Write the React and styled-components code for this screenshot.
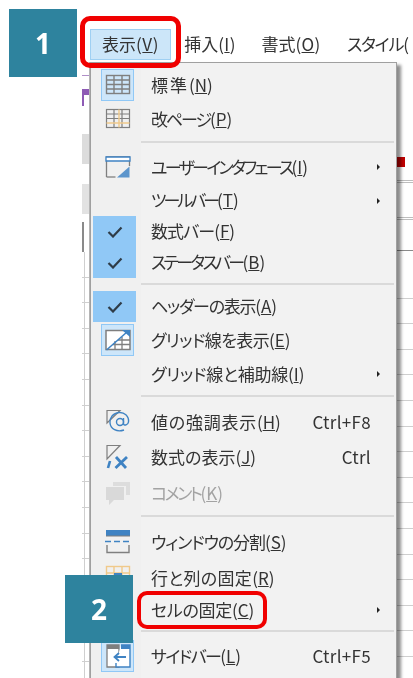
import React from "react";
import styled, { createGlobalStyle } from "styled-components";

const Global = createGlobalStyle`
  html, body { margin: 0; padding: 0; background: #fff; }
  body { font-family: "Noto Sans CJK JP", "Noto Sans", sans-serif; font-feature-settings: "palt"; }
`;

const Page = styled.div`
  position: relative;
  width: 413px;
  height: 678px;
  overflow: hidden;
  background: #fff;
  color: #333;
  filter: blur(0.35px);
`;

const MenuBar = styled.div`
  display: flex;
  align-items: center;
  height: 31px;
  padding: 29px 5px 2px 90px;
  font-size: 17px;
  overflow: hidden;
`;

const BarItem = styled.div`
  flex: none;
  width: ${(p) => p.$w}px;
  height: 31px;
  margin-left: ${(p) => p.$gap || 0}px;
  padding-bottom: 2px;
  display: flex;
  align-items: center;
  justify-content: ${(p) => (p.$clip ? "flex-start" : "center")};
  box-sizing: border-box;
  white-space: nowrap;
  letter-spacing: ${(p) => p.$ls || 0}px;
  background: ${(p) => (p.$active ? "#cce6f9" : "transparent")};
  border: 1px solid ${(p) => (p.$active ? "#9fd0f3" : "transparent")};
`;

const Body = styled.div`
  display: flex;
  height: 616px;
  margin-left: 82px;
`;

const Strip = styled.div`
  flex: none;
  width: ${(p) => p.$w}px;
  display: flex;
  flex-direction: column;
  overflow: hidden;
`;

const Sliver = styled.div`
  flex: none;
  height: ${(p) => p.$h}px;
  width: ${(p) => p.$w || "100%"};
  background: ${(p) => p.$bg || "transparent"};
`;

const GridFill = styled.div`
  flex: 1;
  background-color: #fff;
  background-image:
    repeating-linear-gradient(to bottom, transparent 0 24.6px, #cfcfcf 24.6px 25.6px),
    ${(p) => p.$rail || "none"};
`;

const Menu = styled.div`
  position: relative;
  z-index: 1;
  flex: none;
  width: 307px;
  box-sizing: border-box;
  padding-top: 5px;
  border: 1px solid #a0a0a0;
  border-bottom: none;
  background: linear-gradient(to right, #f0f0f0 50px, #f2f2f2 50px);
  box-shadow: 4px 3px 3px rgba(0, 0, 0, 0.45), -1px 0 0 #b5b5b5;
  font-size: 17px;
`;

const Row = styled.div`
  display: flex;
  align-items: center;
  height: ${(p) => p.$h}px;
  color: ${(p) => (p.$disabled ? "#a3a3a3" : "#333")};
`;

const Gutter = styled.div`
  flex: none;
  width: 50px;
  height: 100%;
  display: flex;
  align-items: center;
`;

const IconSlot = styled.div`
  flex: none;
  width: 33px;
  height: 32px;
  margin-left: 10px;
  box-sizing: border-box;
  display: flex;
  align-items: center;
  justify-content: center;
  background: ${(p) => (p.$on ? "#cde6fa" : "transparent")};
  border: 1px solid ${(p) => (p.$on ? "#90c8f6" : "transparent")};
`;

const CheckFill = styled.div`
  flex: none;
  width: 43px;
  height: 100%;
  margin-left: 2px;
  display: flex;
  align-items: center;
  justify-content: center;
  background: #90c8f6;
`;

const Label = styled.div`
  flex: 1;
  padding: 0 0 2px 10px;
  white-space: nowrap;
`;

const Words = styled.span`
  letter-spacing: ${(p) => p.$ls || 0}px;
`;

const Shortcut = styled.div`
  flex: none;
  margin-right: 25px;
  padding-bottom: 2px;
  white-space: nowrap;
  letter-spacing: 0.3px;
`;

const Arrow = styled.div`
  flex: none;
  width: 0;
  height: 0;
  margin-right: 16px;
  border-left: 3px solid #222;
  border-top: 3px solid transparent;
  border-bottom: 3px solid transparent;
`;

const Separator = styled.div`
  height: 2px;
  margin: ${(p) => p.$top}px 2px ${(p) => p.$bottom}px 50px;
  background: #dadada;
`;

const Badge = styled.div`
  position: absolute;
  z-index: 3;
  left: ${(p) => p.$x}px;
  top: ${(p) => p.$y}px;
  width: 68px;
  height: 68px;
  display: flex;
  align-items: center;
  justify-content: center;
  background: #2e839e;
  color: #fff;
  font-family: "Noto Sans", sans-serif;
  font-weight: 700;
  font-size: 28px;
`;

const Callout = styled.div`
  position: absolute;
  z-index: 2;
  left: ${(p) => p.$x}px;
  top: ${(p) => p.$y}px;
  width: ${(p) => p.$w}px;
  height: ${(p) => p.$h}px;
  box-sizing: border-box;
  border: ${(p) => p.$b}px solid #f00000;
  border-radius: 10px;
`;

const G = "#7f7f7f";
const B = "#3f83c3";
const O = "#f0c98a";

const Svg = ({ children }) => (
  <svg width="26" height="26" viewBox="0 0 26 26" fill="none">{children}</svg>
);

const TableIcon = () => (
  <Svg>
    <rect x="1.5" y="3.5" width="23" height="18" stroke={G} strokeWidth="1.4" />
    <path d="M1.5 8h23M1.5 12.5h23M1.5 17h23M9 3.5v18M17 3.5v18" stroke={G} strokeWidth="1.4" />
  </Svg>
);
const PageBreakIcon = () => (
  <Svg>
    <rect x="1.5" y="3.5" width="23" height="18" stroke={G} strokeWidth="1.2" />
    <path d="M1.5 8h23M1.5 12.5h23M9 3.5v18M17 3.5v18" stroke={G} strokeWidth="1.2" />
    <path d="M1.5 17h23M14 3.5v18" stroke={O} strokeWidth="1.4" />
  </Svg>
);
const InterfaceIcon = () => (
  <Svg>
    <path d="M1.5 23V3h23v9" stroke={G} strokeWidth="1.3" />
    <path d="M1.5 23h9" stroke={G} strokeWidth="1.3" />
    <path d="M1 3h24v4H1z" fill="#fff" stroke={B} strokeWidth="1.3" />
    <path d="M12 23.5L24.5 12.5V23.5z" fill="#5c95cc" />
  </Svg>
);
const GridLinesIcon = () => (
  <Svg>
    <path d="M1 3.5h24v19H1z" fill="#fff" stroke={G} strokeWidth="1.5" />
    <path d="M13 13h12M8 17.5h17M10 14v8M17 10v12" stroke={G} strokeWidth="1.3" />
    <path d="M1.5 23L22 5" stroke={B} strokeWidth="1.6" />
    <path d="M17 3h8v7z" fill={B} />
  </Svg>
);
const HighlightIcon = () => (
  <Svg>
    <path d="M2 1.5h13L2 14z" stroke={G} strokeWidth="1.2" />
    <circle cx="15" cy="13" r="3.5" stroke={B} strokeWidth="1.4" />
    <path d="M18.5 9v5.5c0 2.5 4.5 2 5-1.5C24.2 7 19 3 14 3.5 8 4 4.5 9 5 14c.5 6 7 9.5 14 7" stroke={B} strokeWidth="1.4" />
  </Svg>
);
const FormulaIcon = () => (
  <Svg>
    <path d="M2 1.5h13L2 15z" stroke={G} strokeWidth="1.2" />
    <path d="M3 24l2-7" stroke={B} strokeWidth="2.6" />
    <path d="M11 13l10 11M22 13L10.5 24" stroke={B} strokeWidth="2.8" />
  </Svg>
);
const CommentIcon = () => (
  <Svg>
    <path d="M8 2h17v13h-4V6H8z" fill="#dddddd" />
    <path d="M1 7h18v13H9l-5 5v-5H1z" fill="#d9d9d9" />
  </Svg>
);
const SplitIcon = () => (
  <Svg>
    <path d="M1 1h24v6H1z" fill={B} />
    <path d="M1 7h24" stroke={G} strokeWidth="1" />
    <path d="M0 12.5h26" stroke={B} strokeWidth="1.4" strokeDasharray="6 3" />
    <path d="M2 16v7.5h22V16" stroke={G} strokeWidth="1.4" />
  </Svg>
);
const FreezeIcon = () => (
  <Svg>
    <rect x="1.5" y="1.5" width="23" height="18" stroke={O} strokeWidth="1.4" />
    <path d="M1.5 8h23M9 1.5v18M17 1.5v18" stroke={O} strokeWidth="1.4" />
    <path d="M9 8h8v10H9z" fill={B} />
  </Svg>
);
const SidebarIcon = () => (
  <Svg>
    <path d="M2 2h12v22H2z" fill="#fff" stroke={G} strokeWidth="1.3" />
    <path d="M2 2h12v4H2z" fill={G} />
    <path d="M16 2h9v22H11v-4" fill="#fff" stroke={B} strokeWidth="1.4" />
    <path d="M16 2h9v4h-9z" fill={B} />
    <path d="M21 14h-11M14 10l-4.5 4 4.5 4" stroke={B} strokeWidth="1.8" />
  </Svg>
);
const Check = () => (
  <svg width="16" height="12" viewBox="0 0 16 12" fill="none">
    <path d="M1.5 6l4.5 4.5L14.5 1.5" stroke="#2f3c48" strokeWidth="2.2" />
  </svg>
);

const Access = ({ text, k, ls }) => (
  <>
    <Words $ls={ls}>{text}</Words>(<u>{k}</u>)
  </>
);

const items = [
  { h: 34, t: "標準", k: "N", icon: TableIcon, on: true, ls: 2 },
  { h: 34, t: "改ページ", k: "P", icon: PageBreakIcon, ls: -2.1 },
  { sep: [5, 6] },
  { h: 36, t: "ユーザーインタフェース", k: "I", icon: InterfaceIcon, sub: true, ls: -2.7 },
  { h: 31, t: "ツールバー", k: "T", sub: true, ls: -3 },
  { h: 31, t: "数式バー", k: "F", check: true, ls: -0.9 },
  { h: 31, t: "ステータスバー", k: "B", check: true, ls: -2.7 },
  { sep: [5, 6] },
  { h: 31, t: "ヘッダーの表示", k: "A", check: true, ls: -1.3 },
  { h: 36, t: "グリッド線を表示", k: "E", icon: GridLinesIcon, on: true, ls: -0.6 },
  { h: 32, t: "グリッド線と補助線", k: "I", sub: true, ls: -0.25 },
  { sep: [5, 8] },
  { h: 34, t: "値の強調表示", k: "H", icon: HighlightIcon, key: "Ctrl+F8", ls: 0.75 },
  { h: 36, t: "数式の表示", k: "J", icon: FormulaIcon, key: "Ctrl" },
  { h: 36, t: "コメント", k: "K", icon: CommentIcon, disabled: true, ls: -2.45 },
  { sep: [4, 7] },
  { h: 36, t: "ウィンドウの分割", k: "S", icon: SplitIcon, ls: -1.1 },
  { h: 36, t: "行と列の固定", k: "R", icon: FreezeIcon, ls: 0.3 },
  { h: 28, t: "セルの固定", k: "C", sub: true, ls: -0.3 },
  { sep: [6, 8] },
  { h: 32, t: "サイドバー", k: "L", icon: SidebarIcon, on: true, key: "Ctrl+F5", ls: -1.6 },
];

const rail = "linear-gradient(to right, transparent 2px, #cfcfcf 2px, #cfcfcf 3px, transparent 3px)";

export default function App() {
  return (
    <Page>
      <Global />
      <MenuBar>
        <BarItem $w={81} $active $ls={0.5}><Access text="表示" k="V" /></BarItem>
        <BarItem $w={58} $gap={10} $ls={0.3}><Access text="挿入" k="I" /></BarItem>
        <BarItem $w={66} $gap={19} $ls={0.3}><Access text="書式" k="O" /></BarItem>
        <BarItem $w={62} $gap={22} $clip $ls={-1.2}>スタイル(</BarItem>
      </MenuBar>
      <Body>
        <Strip $w={8}>
          <Sliver $h={13} />
          <Sliver $h={1} $bg="#b08fc8" />
          <Sliver $h={13} />
          <Sliver $h={6} $bg="#8e5bb5" />
          <Sliver $h={11} $w="2px" $bg="#8e5bb5" />
          <Sliver $h={28} />
          <Sliver $h={30} $bg="#dcdcdc" />
          <Sliver $h={20} />
          <Sliver $h={30} $bg="#e2e2e2" />
          <Sliver $h={8} />
          <Sliver $h={30} $w="2px" $bg="#8a8a8a" />
          <GridFill $rail={rail} />
        </Strip>
        <Menu>
          {items.map((it, i) => {
            if (it.sep) return <Separator key={i} $top={it.sep[0]} $bottom={it.sep[1]} />;
            const Icon = it.icon;
            return (
              <Row key={i} $h={it.h} $disabled={it.disabled}>
                <Gutter>
                  {it.check ? (
                    <CheckFill><Check /></CheckFill>
                  ) : Icon ? (
                    <IconSlot $on={it.on}><Icon /></IconSlot>
                  ) : null}
                </Gutter>
                <Label><Access text={it.t} k={it.k} ls={it.ls} /></Label>
                {it.key && <Shortcut>{it.key}</Shortcut>}
                {it.sub && <Arrow />}
              </Row>
            );
          })}
        </Menu>
        <Strip $w={16}>
          <Sliver $h={95} />
          <Sliver $h={10} $w="8px" $bg="#c00000" />
          <Sliver $h={13} />
          <Sliver $h={1} $bg="#bdbdbd" />
          <Sliver $h={1} />
          <Sliver $h={1} $bg="#bdbdbd" />
          <Sliver $h={34} />
          <Sliver $h={1} $bg="#bdbdbd" />
          <Sliver $h={1} />
          <Sliver $h={1} $bg="#bdbdbd" />
          <Sliver $h={30} />
          <Sliver $h={1} $bg="#8a8a8a" />
          <Sliver $h={22} />
          <GridFill />
        </Strip>
      </Body>
      <Badge $x={9} $y={9}>1</Badge>
      <Badge $x={65} $y={575}>2</Badge>
      <Callout $x={80} $y={16} $w={101} $h={52} $b={5} />
      <Callout $x={137} $y={591} $w={130} $h={38} $b={4} />
    </Page>
  );
}
